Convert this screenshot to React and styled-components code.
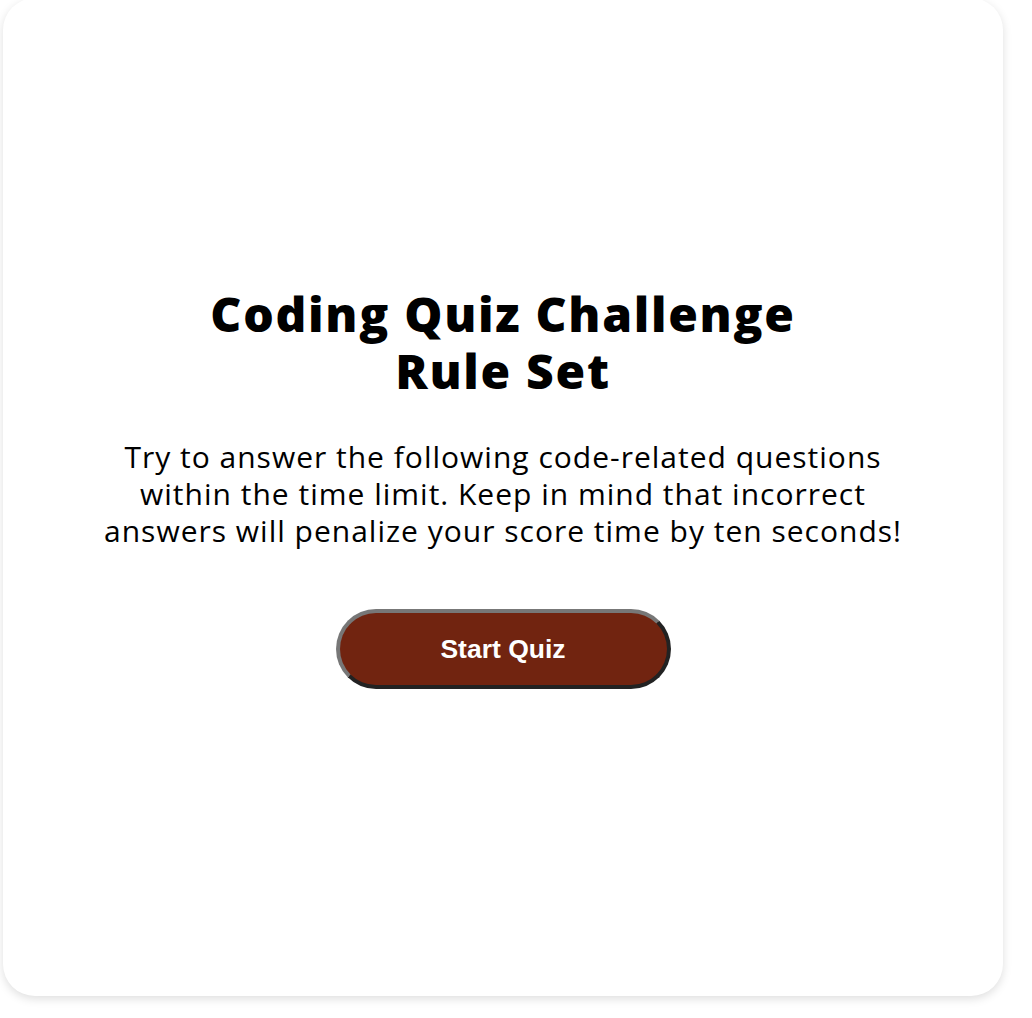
import styled, { createGlobalStyle } from 'styled-components';

const GlobalStyle = createGlobalStyle`
  html, body {
    margin: 0;
    padding: 0;
    background: #ffffff;
  }

  body {
    font-family: "Open Sans", "Liberation Sans", sans-serif;
    color: #000000;
  }
`;

const Page = styled.div`
  padding: 0 0 0 3px;
  height: 1018px;
  overflow: hidden;
`;

const Card = styled.main`
  margin-top: -2px;
  width: 1000px;
  height: 998px;
  box-sizing: border-box;
  padding-bottom: 20px;
  border-radius: 32px;
  background: #ffffff;
  box-shadow: 0 3px 10px rgba(0, 0, 0, 0.13);
  display: flex;
  flex-direction: column;
  align-items: center;
  justify-content: center;
`;

const Title = styled.h1`
  margin: 0;
  max-width: 640px;
  font-size: 48px;
  line-height: 57px;
  font-weight: 800;
  letter-spacing: 1.7px;
  text-align: center;
`;

const Rules = styled.p`
  margin: 39px 0 0;
  max-width: 810px;
  font-size: 30px;
  line-height: 37px;
  font-weight: 400;
  letter-spacing: 1px;
  text-align: center;
`;

const StartButton = styled.button`
  margin-top: 60px;
  width: 335px;
  height: 80px;
  border: 4px solid;
  border-color: #777777 #222222 #222222 #777777;
  border-radius: 40px;
  background: #712410;
  color: #ffffff;
  font-family: "Liberation Sans", Arial, sans-serif;
  font-size: 26.5px;
  font-weight: 700;
  cursor: pointer;
`;

export default function App() {
  return (
    <>
      <GlobalStyle />
      <Page>
        <Card>
          <Title>Coding Quiz Challenge Rule Set</Title>
          <Rules>
            Try to answer the following code-related questions within the time
            limit. Keep in mind that incorrect answers will penalize your score
            time by ten seconds!
          </Rules>
          <StartButton type="button">Start Quiz</StartButton>
        </Card>
      </Page>
    </>
  );
}
